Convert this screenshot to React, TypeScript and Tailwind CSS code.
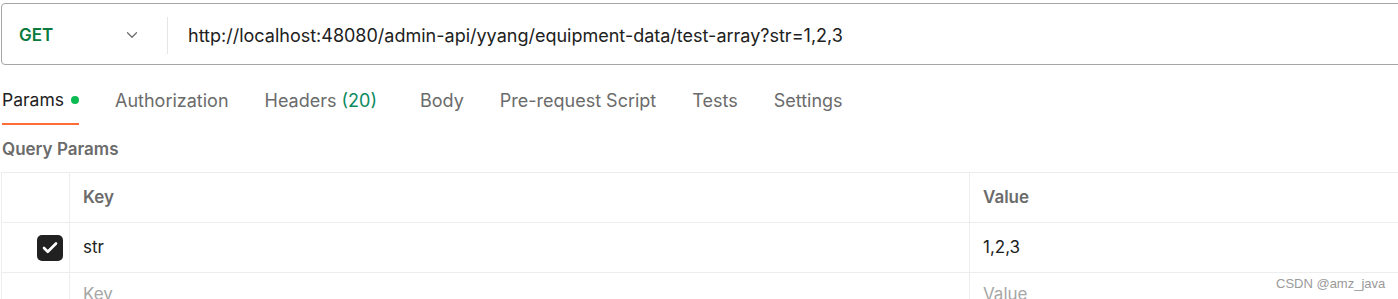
import { ChevronDown, Check } from 'lucide-react';

const tabs = [
  { label: 'Authorization' },
  { label: 'Headers', count: '(20)' },
  { label: 'Body' },
  { label: 'Pre-request Script' },
  { label: 'Tests' },
  { label: 'Settings' },
];

export default function App() {
  return (
    <div className="w-[1398px] h-[299px] overflow-hidden bg-white relative font-['Inter',sans-serif]">
      {/* Request bar */}
      <div className="pt-[3px] pl-px">
        <div className="flex items-center h-[62px] w-[1420px] border border-[#a6a6a6] rounded-[4px] pt-[2px]">
          <div className="flex items-center w-[165px] pl-[17px] pr-[26px] justify-between">
            <span className="text-[17px] font-semibold text-[#0b7a3e] pt-px">GET</span>
            <ChevronDown className="w-[18px] h-[18px] text-[#6b6b6b]" strokeWidth={1.6} />
          </div>
          <div className="w-px h-[37px] bg-[#e6e6e6]" />
          <span className="pl-[20px] text-[18px] text-[#212121]">
            http://localhost:48080/admin-api/yyang/equipment-data/test-array?str=1,2,3
          </span>
        </div>
      </div>

      {/* Tabs */}
      <div className="flex items-start h-[58px] pt-[22px] pl-[2px]">
        <div className="flex flex-col">
          <div className="flex items-center gap-[7px] text-[17.5px] text-[#212121]">
            Params
            <span className="w-[8px] h-[8px] rounded-full bg-[#0cbb52]" />
          </div>
          <div className="mt-[10px] h-[2px] bg-[#ff6c37]" />
        </div>
        {tabs.map((t) => (
          <div key={t.label} className={`ml-[36px] text-[18px] text-[#6b6b6b] ${t.count ? 'pr-[7px]' : ''}`}>
            {t.label}
            {t.count && <span className="ml-[5px] text-[#0b8a5e]">{t.count}</span>}
          </div>
        ))}
      </div>

      <div className="pl-[2px] pt-[14px] h-[49px] text-[17px] font-semibold text-[#6b6b6b]">Query Params</div>

      {/* Table */}
      <div className="ml-px border-t border-l border-[#ededed]">
        <div className="flex h-[50px] border-b border-[#ededed] font-semibold text-[17px] text-[#6b6b6b]">
          <div className="w-[68px] border-r border-[#ededed]" />
          <div className="w-[900px] border-r border-[#ededed] flex items-center pl-[13px]">Key</div>
          <div className="flex-1 flex items-center pl-[13px]">Value</div>
        </div>
        <div className="flex h-[50px] border-b border-[#ededed] text-[17px] text-[#212121]">
          <div className="w-[68px] border-r border-[#ededed] flex items-center justify-end pr-[6px]">
            <div className="w-[26px] h-[26px] rounded-[5px] bg-[#212121] flex items-center justify-center">
              <Check className="w-[18px] h-[18px] text-white" strokeWidth={3.5} />
            </div>
          </div>
          <div className="w-[900px] border-r border-[#ededed] flex items-center pl-[13px]">str</div>
          <div className="flex-1 flex items-center pl-[13px]">1,2,3</div>
        </div>
        <div className="flex h-[50px] text-[17px] text-[#a6a6a6]">
          <div className="w-[68px] border-r border-[#ededed]" />
          <div className="w-[900px] border-r border-[#ededed] pt-[9px] pl-[13px]">Key</div>
          <div className="flex-1 pt-[9px] pl-[13px]">Value</div>
        </div>
      </div>

      {/* watermark */}
      <div className="absolute left-[1276px] top-[274px] text-[13px] text-[#9a9a9a] font-['Liberation_Sans',sans-serif]">
        CSDN @amz_java
      </div>
    </div>
  );
}
